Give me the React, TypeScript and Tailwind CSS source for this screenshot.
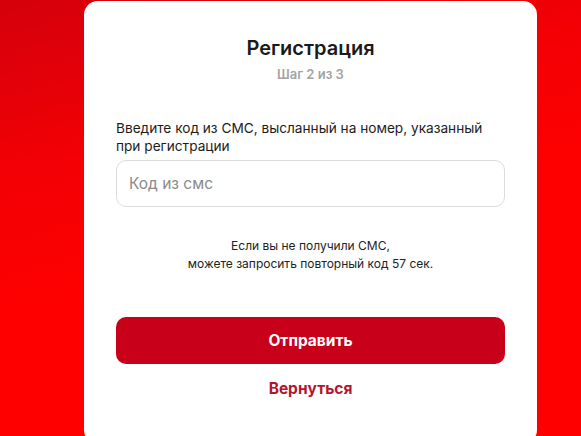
import React from "react";

export default function App() {
  return (
    <div
      className="w-[581px] h-[436px] overflow-hidden bg-[linear-gradient(165deg,#d4000c_0%,#f30005_30%,#ff0000_55%,#ff0000_100%)]"
      style={{ fontFamily: "Inter, 'Noto Sans', 'Liberation Sans', sans-serif" }}
    >
      <div className="ml-[84px] mt-[1px] w-[453px] h-[443px] bg-white rounded-[14px] px-[32px] pt-[35px] flex flex-col">
        <h1 className="text-center text-[20px] leading-[24px] font-semibold text-[#1a1a1a]">Регистрация</h1>
        <div className="mt-[6px] text-center text-[13px] leading-[16px] font-semibold text-[#a3a3a3]">Шаг 2 из 3</div>
        <p className="mt-[37px] text-[13.65px] leading-[18px] text-[#1c1c1c]">
          Введите код из СМС, высланный на номер, указанный при регистрации
        </p>
        <input
          className="mt-[5px] h-[47px] w-full rounded-[10px] border border-[#dcdcdc] px-[12px] text-[15.5px] text-[#1c1c1c] placeholder:text-[#8a8a8a] outline-none"
          placeholder="Код из смс"
        />
        <div className="mt-[30px] text-center text-[12px] leading-[18px] text-[#222222]">
          Если вы не получили СМС,
          <br />
          можете запросить повторный код 57 сек.
        </div>
        <button className="mt-[44px] h-[47px] w-full rounded-[10px] bg-[#c8001a] text-white text-[15.5px] font-bold">
          Отправить
        </button>
        <button className="mt-[15px] h-[20px] text-center text-[15.5px] leading-[20px] font-bold text-[#b3152e]">
          Вернуться
        </button>
      </div>
    </div>
  );
}
